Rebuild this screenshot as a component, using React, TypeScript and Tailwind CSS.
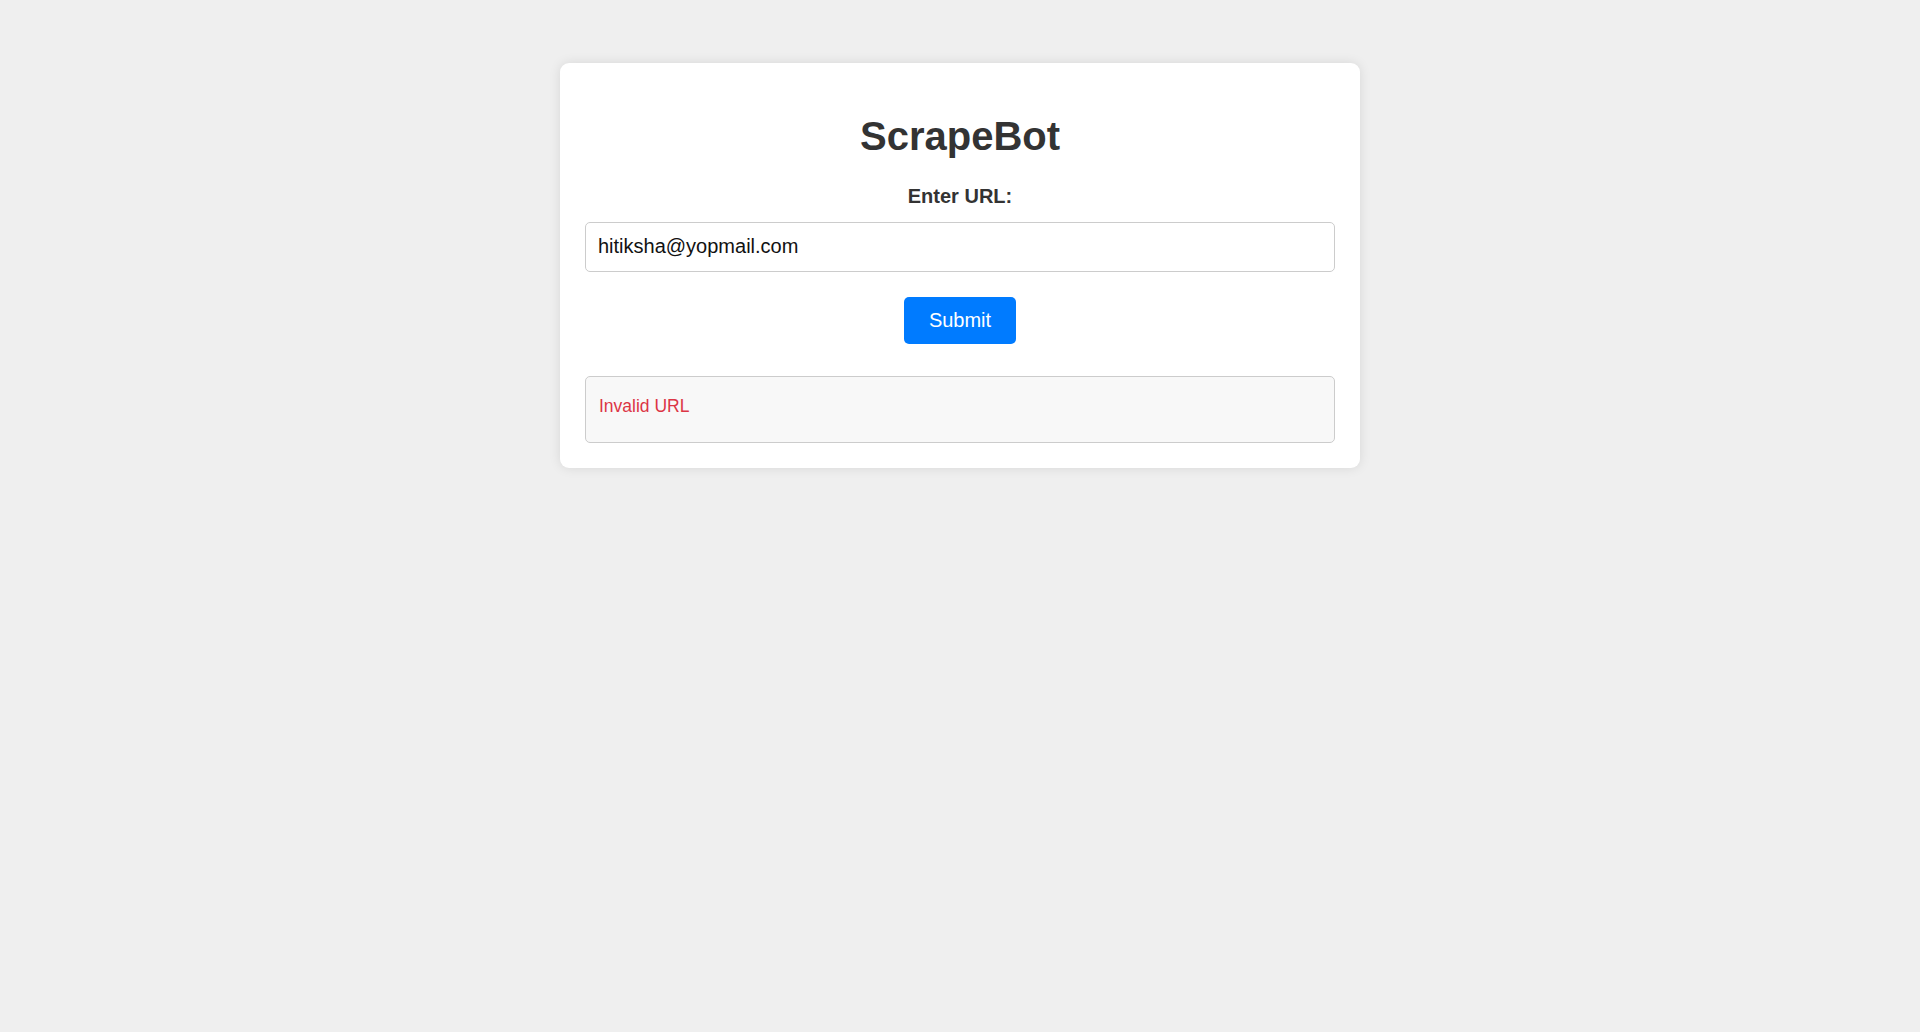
import React, { useState } from 'react';

const App: React.FC = () => {
  const [url, setUrl] = useState('hitiksha@yopmail.com');
  const [error] = useState('Invalid URL');

  return (
    <div className="min-h-screen w-full bg-[#efefef] font-['Liberation_Sans',Arial,sans-serif] pt-[63px]">
      <div className="mx-auto w-[800px] rounded-[9px] bg-white px-[25px] pt-[50px] pb-[25px] shadow-[0_0_12px_rgba(0,0,0,0.1)]">
        {/* Title */}
        <h1 className="text-center text-[40px] leading-[46px] font-bold text-[#333]">ScrapeBot</h1>

        <form className="mt-[26px] flex flex-col items-center" onSubmit={(e) => e.preventDefault()}>
          <label className="text-[20px] leading-[23px] font-bold text-[#333]">Enter URL:</label>
          <input
            type="text"
            value={url}
            onChange={(e) => setUrl(e.target.value)}
            className="mt-[14px] h-[50px] w-full rounded-[5px] border border-[#ccc] bg-white px-[12px] pb-[2px] text-[20px] text-[#111] outline-none"
          />
          <button
            type="submit"
            className="mt-[25px] h-[47px] rounded-[5px] bg-[#007bff] px-[25px] text-[20px] leading-[23px] text-white"
          >
            Submit
          </button>
        </form>

        {/* Result */}
        <div className="mt-[32px] h-[67px] rounded-[5px] border border-[#ccc] bg-[#f8f8f8] px-[13px] pt-[19px]">
          <p className="text-[17.5px] leading-[20px] text-[#dc3545]">{error}</p>
        </div>
      </div>
    </div>
  );
};

export default App;
